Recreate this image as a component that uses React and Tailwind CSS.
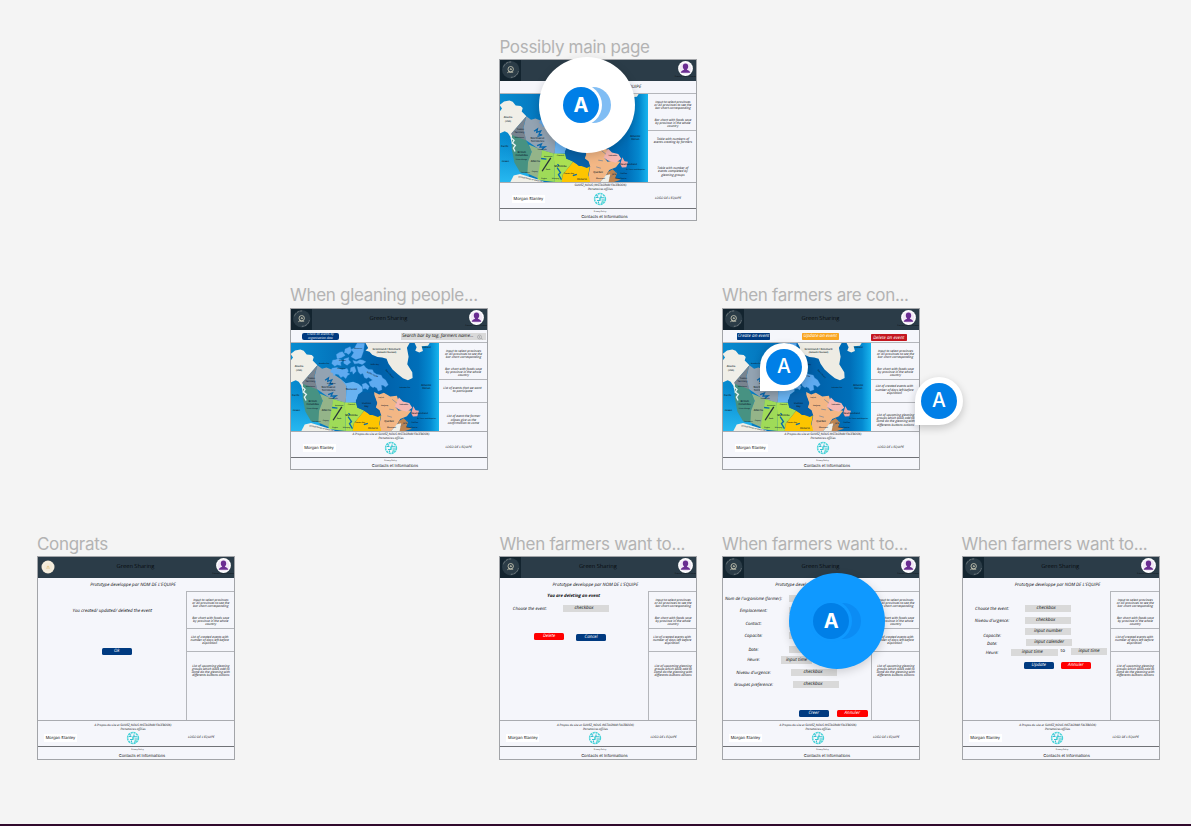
import React from "react";

/* Small block of one or more centred lines. */
function Lines({ text, className = "" }) {
  return (
    <p className={`flex flex-col items-center whitespace-nowrap text-[3.3px] leading-[3.3px] italic ${className}`}>
      {text.map((l) => (
        <span key={l}>{l}</span>
      ))}
    </p>
  );
}

function Field({ className = "w-[46px]", children }) {
  return (
    <span className={`flex h-[7px] shrink-0 items-center justify-center whitespace-nowrap bg-[#d9d9d9] text-[4.7px] leading-none italic ${className}`}>
      {children}
    </span>
  );
}

function Button({ className, children }) {
  return (
    <span className={`flex h-[7px] shrink-0 items-center justify-center whitespace-nowrap leading-none italic text-white ${className}`}>
      {children}
    </span>
  );
}

function FormButton({ className, children }) {
  return <Button className={`w-[30.5px] rounded-[1.5px] text-[4.5px] ${className}`}>{children}</Button>;
}

function Row({ label, className = "h-[12px]", children }) {
  return (
    <div className={`flex shrink-0 items-start ${className}`}>
      <span className="w-[61px] shrink-0 whitespace-nowrap text-center text-[4.4px] leading-[8px] italic">{label}</span>
      {children}
    </div>
  );
}

const MAP_LABELS = [
  [58, 258, "Alaska", 8], [58, 268, "(USA)", 7], [95, 292, "Yukon", 7], [92, 302, "Territory", 7],
  [146, 319, "Northwest", 8], [146, 329, "Territories", 8], [215, 325, "Nunavut", 8],
  [99, 362, "British", 8], [99, 371, "Columbia", 8], [140, 388, "Alberta", 8], [215, 403, "Manitoba", 8],
  [178, 412, "Sask.", 6], [279, 443, "Ontario", 8], [328, 421, "Quebec", 8], [260, 368, "Hudson", 7], [260, 377, "Bay", 7],
  [320, 206, "Greenland / Denmark", 8], [320, 215, "(Kalaallit Nunaat)", 7], [440, 200, "Iceland", 7],
  [439, 314, "Atlantic", 8], [439, 323, "Ocean", 8], [48, 344, "Pacific", 7], [50, 388, "Ocean", 7],
  [375, 321, "Labrador Sea", 5], [285, 251, "Baffin Bay", 5], [419, 398, "Newfoundland", 7],
  [440, 411, "St. Pierre and Miquelon", 5], [133, 250, "Beaufort Sea", 5], [98, 383, "Prince George", 5],
  [110, 421, "Vancouver", 5], [138, 418, "Calgary", 5], [166, 440, "Regina", 5], [200, 440, "Winnipeg", 5],
  [240, 423, "Thunder Bay", 5], [335, 438, "Montreal", 6], [376, 428, "N.B.", 6], [404, 425, "Halifax", 6],
  [372, 372, "Labrador", 6], [92, 316, "Whitehorse", 5], [155, 307, "Great Bear", 5], [160, 354, "Yellowknife", 5],
  [304, 350, "Ivujivik", 5], [314, 373, "Kuujjuaq", 5], [215, 370, "Churchill", 5], [188, 239, "Resolute", 5],
  [185, 262, "Victoria Is.", 5], [235, 205, "Ellesmere", 5], [395, 440, "Nova Scotia", 6], [178, 373, "Athabasca", 5],
];

const ISLANDS = [
  "232,189 254,189 251,212 244,232 228,237 214,229 222,217 214,207 224,203",
  "196,206 205,202 211,199 215,210 211,218 206,222 199,217 194,218",
  "170,222 179,216 188,214 196,225 184,232 172,234",
  "159,239 168,238 176,234 188,241 182,247 184,255 172,253 165,257 156,249",
  "193,236 207,231 206,238 213,245 202,254 192,248",
  "219,240 231,243 240,238 249,239 258,244 247,252 236,248 224,250",
  "157,263 172,261 187,268 202,264 206,272 202,276 210,280 203,285 198,294 190,287 183,291 176,282 168,280 162,286 160,278 152,274",
  "213,262 224,258 229,272 220,281 218,272 211,274",
  "232,258 240,260 252,254 258,262 266,267 278,268 281,275 290,281 304,284 308,292 317,298 325,312 317,319 310,314 304,313 306,327 295,331 291,322 283,318 280,321 272,316 267,304 272,302 278,298 266,290 260,294 254,291 249,278 242,281 236,274",
  "247,311 258,307 268,317 264,327 256,323 250,325",
];

const covered = (x, y) => Math.hypot(x - 293, y - 222) < 165;

function CanadaMap({ id }) {
  const clear = (x, y) => id !== "main" || !covered(x, y);
  return (
    <svg viewBox="31 188 446 262" preserveAspectRatio="none" className="block h-[88px] w-[149px] shrink-0">
      <defs>
        <linearGradient id={`${id}a`} x1="0" x2="1" y1="0" y2="0">
          <stop offset="0" stopColor="#078dd1" />
          <stop offset="0.3" stopColor="#0475bd" />
          <stop offset="0.6" stopColor="#0060a9" />
          <stop offset="0.86" stopColor="#006fb9" />
          <stop offset="0.94" stopColor="#0489d0" />
          <stop offset="1" stopColor="#18b5ee" />
        </linearGradient>
        <linearGradient id={`${id}b`} x1="0" x2="0" y1="0" y2="1">
          <stop offset="0.5" stopColor="#20b4ee" stopOpacity="0" />
          <stop offset="1" stopColor="#27b8f0" />
        </linearGradient>
      </defs>
      <rect x="31" y="188" width="446" height="262" fill={`url(#${id}a)`} />
      <path d="M31 188H120V450H31Z" fill={`url(#${id}b)`} />
      <path d="M31 243 40 231 33 221 46 210 62 207 72 211 81 222 96 224 102 230 99 240 113 254 70 304 78 318 82 334 77 350 80 362 73 356 69 334 65 315 57 303 48 299 31 306Z" fill="#f0efe8" />
      <path d="M113 254 67 306 76 322 113 328 104 288Z" fill="#788490" />
      <path d="M113 254 127 265 140 261 157 268 166 284 184 296 200 314 198 367 150 352 112 326 104 290Z" fill="#93a3b2" />
      <path d="M184 296 198 308 220 303 236 309 248 320 248 332 235 341 228 365 198 367 200 316Z" fill="#69b3f2" />
      {ISLANDS.map((p) => (
        <polygon key={p} points={p} fill="#5eaaf0" stroke="#5eaaf0" strokeWidth="1" />
      ))}
      <path d="M70 310 112 326 129 358 119 390 123 424 94 421 77 392 69 350Z" fill="#479282" />
      <path d="M120 338 160 355 153 441 116 425 118 390 129 360Z" fill="#94b489" />
      <path d="M160 355 195 365 198 450 146 444Z" fill="#9fdb58" />
      <path d="M195 365 229 366 233 381 254 388 221 429 219 450 198 450Z" fill="#aae052" />
      <path d="M254 388 270 402 303 403 298 430 308 450 219 450 221 429Z" fill="#fdc500" />
      <path d="M283 334 298 341 312 336 331 347 351 345 357 365 345 376 356 390 374 386 394 390 381 406 361 414 350 433 334 450 304 450 299 430 304 404 299 388 288 380 292 365 284 354Z" fill="#f3b785" />
      <path d="M357 350 369 362 388 367 397 381 381 393 357 386 344 377Z" fill="#f5b7b3" />
      <path d="M400 376 407 388 417 390 412 406 399 407 394 397Z" fill="#f0a7a6" />
      <path d="M356 421 371 412 384 424 379 437 396 443 375 450 350 450Z" fill="#bd8451" />
      <path d="M257 188H389L381 202 386 229 382 251 397 275 398 292 384 299 369 293 354 281 338 267 326 250 320 235 307 231 293 230 277 223 269 214 257 210 265 203Z" fill="#eeece4" />
      <path d="M404 188H449L444 196 425 198 429 212 418 216 406 211 410 201Z" fill="#eeece4" />
      <path d="M65 450 75 431 94 426 150 443 166 450Z" fill="#f0efe8" />
      <path d="M334 450 351 430 364 427 359 450Z" fill="#f0efe8" />
      <path d="M67 318l9 8-5 8 9 7-6 8 5 10" fill="none" stroke="#e4f2f2" strokeWidth="4" />
      <path d="M136 299l10-7-2 10 12-4-5 10 9 2-14 4M145 342l13-5-4 9 15-1-10 8M157 380l16 2M205 407l10 15-6 6 9 15M206 397l5 5M252 431l12-4" fill="none" stroke="#0868ad" strokeWidth="4" />
      <path d="M228 360 236 344 250 334 280 337 288 354 292 368 284 382 298 392 303 404 294 408 278 402 262 396 250 388 232 380Z" fill="#0862a8" />
      <path d="M186 378 160 418" stroke="#27333b" strokeWidth="4" />
      <path d="M337 356l14 11M362 437l20-17M322 405l14 4M328 385l14 2" stroke="#6c8199" strokeWidth="2" />
      <g fill="#0b1b2b" textAnchor="middle" fontFamily="Open Sans, sans-serif" fontWeight="600">
        {MAP_LABELS.filter(([x, y]) => clear(x, y)).map(([x, y, t, s]) => (
          <text key={`${x}-${y}`} x={x} y={y + 2} fontSize={s}>{t}</text>
        ))}
        {id !== "main" && <text fontSize="6" transform="translate(328 281) rotate(48)">Davis Strait</text>}
        {id !== "main" && <text fontSize="6" transform="translate(277 283) rotate(24)">Baffin Island</text>}
        <text fontSize="6" transform="translate(124 443) rotate(12)">United States of America</text>
      </g>
    </svg>
  );
}

function Logo({ light }) {
  if (light)
    return (
      <svg viewBox="0 0 22 22" className="h-[22px] w-[22px] shrink-0">
        <circle cx="11" cy="11" r="6.500" fill="#f3ead8" />
        <circle cx="11" cy="11" r="5" fill="none" stroke="#f8f3e8" strokeWidth=".7" />
        <path d="M9 12.500h4M9.700 11.300l1.300-1.500 1.300 1.500z" stroke="#e6cf9f" fill="#e3bd70" strokeWidth=".6" />
      </svg>
    );
  return (
    <svg viewBox="0 0 22 22" className="h-[22px] w-[22px] shrink-0 bg-[#13242f]">
      <circle cx="11.700" cy="10.700" r="8.700" fill="#2b3c47" />
      <path d="M4.400 8.200A7.700 7.700 0 0 1 12.200 3" fill="none" stroke="#9da4a3" strokeWidth=".9" strokeDasharray=".8 .7" />
      <path d="M19.300 12.500A7.700 7.700 0 0 1 11.200 18.300" fill="none" stroke="#9da4a3" strokeWidth=".9" strokeDasharray=".8 .7" />
      <circle cx="11.700" cy="10.200" r="2.700" fill="none" stroke="#d4d2bd" strokeWidth=".8" />
      <path d="M8.300 13.800l2-1.500M9.700 13.200h4.500M11 11.200l.8-1.800.9 1.800" fill="none" stroke="#d4d2bd" strokeWidth=".8" />
    </svg>
  );
}

function Avatar() {
  return (
    <svg viewBox="0 0 15 15" className="h-[15px] w-[15px] shrink-0">
      <circle cx="7.500" cy="7.500" r="7.400" fill="#fff" />
      <circle cx="7.500" cy="7.500" r="6" fill="#f1e8f6" />
      <path d="M7.500 2.600c1.800 0 2.700 1.200 2.700 2.800 0 1.300-.6 2.400-1.400 3 .3.8 3.200.9 3.500 3.300H2.700c.3-2.400 3.200-2.500 3.500-3.300-.8-.6-1.400-1.700-1.400-3 0-1.600.9-2.800 2.700-2.800z" fill="#6a2c91" />
    </svg>
  );
}

function PartnerLogo() {
  return (
    <svg viewBox="0 0 14 14" className="h-[14px] w-[14px] shrink-0">
      <circle cx="7" cy="7" r="5.400" fill="none" stroke="#46d3d8" strokeWidth="1.500" strokeDasharray="2.200 .6" />
      <path d="M3 5.500h2.500M4 8.500h3V5.200M8 3.500v2.300h3M8.500 8h3M5.500 11v-1.600M9 11.500V9.600" stroke="#35bfd0" strokeWidth="1.100" fill="none" />
      <circle cx="7" cy="7" r="1" fill="#5ae0d4" />
      <circle cx="9.800" cy="9.600" r=".9" fill="#66e5cf" />
      <circle cx="4.500" cy="4" r=".8" fill="#3cb6d6" />
    </svg>
  );
}

const PROVINCES = ["Input to select provinces", "or All provinces to see the", "bar chart corresponding"];
const CHART = ["Bar chart with foods save", "by province in the whole", "country"];
const CREATED = ["List of created events with", "number of days left before", "expiration"];
const UPCOMING = ["List of upcoming gleaning", "groups which back add to", "come do the gleaning with", "differents buttons actions"];

function SideColumn({ tall, merged, third, fourth }) {
  return (
    <aside className={`flex flex-1 flex-col border-[#b4b6bb] ${tall ? "border-t border-l" : ""}`}>
      <div className="flex h-[37px] shrink-0 flex-col items-center gap-[8.500px] border-b border-[#b4b6bb] pt-[5.500px]">
        <Lines text={PROVINCES} />
        <Lines text={CHART} />
      </div>
      {merged ? (
        <div className="flex flex-1 flex-col items-center justify-between pt-[6px] pb-[6px]">
          <Lines text={third} />
          <Lines text={fourth} />
        </div>
      ) : (
        <>
          <div className={`flex h-[22.500px] shrink-0 items-center justify-center border-b border-[#b4b6bb] pr-[2px] ${tall ? "" : "pb-[3px]"}`}>
            <Lines text={third} />
          </div>
          <div className={`flex flex-1 justify-center ${tall ? "items-start pt-[12px]" : "items-center pt-[5px]"}`}>
            <Lines text={fourth} />
          </div>
        </>
      )}
    </aside>
  );
}

/* One artboard: header, toolbar, body with side column, partner strip, contact bar. */
function Artboard({
  place, title, titleHeight = "h-[22px]", map, lightLogo, hideTitle, bar, children,
  propos = "A Propos du site et SUIVEZ_NOUS INSTAGRAM FACEBOOK)", third = CREATED, fourth = UPCOMING,
}) {
  const tall = !map;
  return (
    <section className={`absolute w-[198px] ${place}`}>
      <h2 className={`whitespace-nowrap font-[Inter] text-[17px] leading-[20px] font-normal tracking-[-0.018em] text-[#b3b3b3] ${titleHeight}`}>{title}</h2>
      <div
        className={`flex flex-col overflow-hidden bg-[#f5f6fb] text-[#08090c] outline outline-1 -outline-offset-1 outline-[#a2a4a8] [font-family:'Open_Sans',sans-serif] [text-rendering:geometricPrecision] ${tall ? "h-[204px]" : "h-[162px]"}`}
      >
        <header className="flex h-[22px] shrink-0 bg-[#2b3c48] text-[#060a0d]">
          <Logo light={lightLogo} />
          <span className="flex-1 pt-[5px] text-center text-[5.700px] leading-[11px]">{!hideTitle && "Green Sharing"}</span>
          <div className="flex w-[23px] shrink-0 flex-col items-center pt-[2.300px]">
            <Avatar />
            <span className="whitespace-nowrap text-[2px] leading-[2.500px]">Prénom Nom utilisateur</span>
          </div>
        </header>
        <div className={`flex shrink-0 ${tall ? "h-[13px] items-center justify-center pt-[2px] pr-[6px]" : "h-[13px] border-b border-[#b4b6bb]"}`}>
          {tall ? <span className="text-[4.500px] leading-none italic">Prototype developpe par NOM DE L'EQUIPE</span> : bar}
        </div>
        <div className={`flex shrink-0 ${tall ? "h-[128.500px]" : "h-[88px]"}`}>
          {map ? <CanadaMap id={map} /> : <div className="flex w-[148.500px] shrink-0 flex-col">{children}</div>}
          <SideColumn tall={tall} merged={map === "main"} third={third} fourth={fourth} />
        </div>
        <div className={`flex shrink-0 flex-col border-t border-[#a9abb0] ${tall ? "h-[26.500px] pt-[2px]" : "h-[25.500px]"}`}>
          <div className={`flex flex-col items-center text-[3.050px] leading-[4.300px] whitespace-nowrap italic ${tall ? "pr-[6px]" : "pl-[4px]"}`}>
            <span>{propos}</span>
            <span>Partenaires affilies</span>
          </div>
          <div className={`flex shrink-0 items-center ${tall ? "gap-[48.500px] pl-[7px]" : "gap-[48px] pl-[12.500px]"}`}>
            <span className="flex h-[8px] w-[33px] shrink-0 items-center justify-center whitespace-nowrap bg-white font-[Inter] text-[4px] leading-none">Morgan Stanley</span>
            <PartnerLogo />
            <span className="whitespace-nowrap text-[3.200px] leading-none italic">LOGO DE L'EQUIPE</span>
          </div>
        </div>
        <footer className="flex flex-1 flex-col items-center border border-[#707277] pt-px pl-[12px]">
          <span className="pr-[9px] text-[2px] leading-[4px]">Privacy Policy</span>
          <span className={`font-[Inter] text-[4px] ${tall ? "leading-[8px]" : "leading-[6.500px]"}`}>Contacts et Informations</span>
        </footer>
      </div>
    </section>
  );
}

function ClusterBubble({ place, blue }) {
  return (
    <div className={`absolute flex h-24 w-24 items-center rounded-full pl-6 shadow-[0_3px_10px_rgba(0,0,0,0.16)] ${place} ${blue ? "bg-[#0f99ff]" : "bg-white"}`}>
      <div className={`z-10 flex h-9 w-9 items-center justify-center rounded-full bg-[#007fe7] ring-[3px] ${blue ? "ring-[#0f99ff]" : "ring-white"}`}>
        <span className="font-[Inter] text-[20px] leading-none font-bold text-white">A</span>
      </div>
      <div className={`-ml-6 h-9 w-9 rounded-full ${blue ? "bg-[#0b8cf4]" : "bg-[#80bdf4]"}`} />
    </div>
  );
}

function CommentPin({ place }) {
  return (
    <div className={`absolute flex h-12 w-12 items-center justify-center rounded-full rounded-bl-[2px] bg-white shadow-[0_3px_9px_rgba(0,0,0,0.2)] ${place}`}>
      <div className="flex h-9 w-9 items-center justify-center rounded-full bg-[#007fe7]">
        <span className="font-[Inter] text-[19.500px] leading-none font-medium text-white">A</span>
      </div>
    </div>
  );
}

export default function App() {
  return (
    <main className="relative h-[826px] w-[1191px] overflow-hidden border-b-2 border-[#300a2c] bg-[#f4f4f4]">
      <Artboard
        place="left-[499.400px] top-[37px]"
        title="Possibly main page"
        map="main"
        hideTitle
        propos="SUIVEZ_NOUS (INSTAGRAM FACEBOOK)"
        third={["Table with numbers of", "events creating by farmers"]}
        fourth={["Table with number of", "events completed by", "gleaning groups"]}
        bar={<span className="flex-1 pt-[2px] text-center text-[4.500px] leading-[8px] italic">Prototype developpe par NOM DE L'EQUIPE</span>}
      />

      <Artboard
        place="left-[290px] top-[285px]"
        titleHeight="h-[23px]"
        title="When gleaning people..."
        map="glean"
        third={["List of events that we want", "to participate"]}
        fourth={["List of event the farmer", "allows give us the", "confirmation to come"]}
        bar={
          <div className="flex flex-1 items-center justify-between pt-px pr-[2.500px] pl-[12px]">
            <Button className="h-[7.500px] w-[37px] rounded-[2px] bg-[#003a80] text-center text-[3.200px]">Check all events by<br />organisation date</Button>
            <div className="flex h-[6.500px] w-[85px] items-center justify-between bg-[#d9d9d9] px-[1.500px] text-[4.700px] leading-none italic">
              <span className="whitespace-nowrap">Search bar by tag, farmers name...</span>
              <svg viewBox="0 0 8 6" className="h-[6px] w-[8px] shrink-0">
                <circle cx="3.500" cy="3" r="2" fill="none" stroke="#8b8d90" strokeWidth=".5" />
                <path d="M5 4.400l1.800 1M3.500 2v2" stroke="#8b8d90" strokeWidth=".5" />
              </svg>
            </div>
          </div>
        }
      />

      <Artboard
        place="left-[722px] top-[285px]"
        titleHeight="h-[23px]"
        title="When farmers are con..."
        map="farm"
        bar={
          <div className="flex flex-1 items-start justify-between pt-[3px] pr-[13px] pl-[15px]">
            <Button className="w-[33px] rounded-[0.800px] bg-[#003a80] text-[4.600px]">Create an event</Button>
            <Button className="w-[36.500px] rounded-[0.800px] bg-[#f9a51f] text-[4.600px]">Update an event</Button>
            <Button className="mt-[1.300px] w-[36.500px] rounded-[0.800px] bg-[#c4161f] text-[4.600px]">Delete an event</Button>
          </div>
        }
      />

      <Artboard place="left-[37px] top-[534px]" title="Congrats" lightLogo>
        <div className="flex flex-col items-center gap-[33px] pt-[17px]">
          <span className="pl-[2px] text-[4.500px] leading-[7px] italic">You created/ updated/ deleted the event</span>
          <FormButton className="mr-[-11px] bg-[#003a80]">Ok</FormButton>
        </div>
      </Artboard>

      <Artboard place="left-[499.400px] top-[534px]" title="When farmers want to...">
        <span className="pt-px text-center text-[4.400px] leading-[8px] font-bold italic">You are deleting an event</span>
        <div className="flex flex-col gap-[21px] pt-[5px]">
          <Row label="Choose the event:" className="h-[7px]">
            <Field className="ml-[2.600px] w-[46px] pr-[4px]">checkbox</Field>
          </Row>
          <div className="flex gap-[11.500px] pl-[34.500px]">
            <FormButton className="bg-[#ff0000]">Delete</FormButton>
            <FormButton className="mt-[0.600px] bg-[#003a80]">Cancel</FormButton>
          </div>
        </div>
      </Artboard>

      <Artboard place="left-[722px] top-[534px]" title="When farmers want to...">
        <div className="flex flex-col pt-[4px] pl-[1px]">
          <Row label="Nom de l'organisme (farmer):"><Field className="ml-[5px] w-[46px]" /></Row>
          <Row label="Emplacement:" className="h-[13px]"><Field className="ml-[5px] w-[46px]" /></Row>
          <Row label="Contact:"><Field className="ml-[5px] w-[46px]" /></Row>
          <Row label="Capacite:" className="h-[14px]"><Field className="ml-[5px] w-[46px]" /></Row>
          <Row label="Date:" className="h-[10px]"><Field className="ml-[5px] w-[46px]" /></Row>
          <Row label="Heure:" className="h-[12.500px]"><Field className="-ml-[3px] h-[8px] w-[31px]">input time</Field></Row>
          <Row label="Niveau d'urgence:" className="h-[12px]"><Field className="ml-[7px] w-[46px] pr-[2px]">checkbox</Field></Row>
          <Row label="Groupes preference:" className="h-[12px]"><Field className="ml-[9px] w-[46px] pr-[6px]">checkbox</Field></Row>
        </div>
        <div className="flex flex-1 items-end justify-end gap-[8px] pr-[3px] pb-[2.500px]">
          <FormButton className="bg-[#003a80]">Creer</FormButton>
          <FormButton className="bg-[#ff0000]">Annuler</FormButton>
        </div>
      </Artboard>

      <Artboard place="left-[961.600px] top-[534px]" title="When farmers want to...">
        <div className="flex flex-col pt-[14px]">
          <Row label="Choose the event:" className="h-[12px]"><Field className="ml-[2.600px] w-[46px] pr-[4px]">checkbox</Field></Row>
          <Row label="Niveau d'urgence:" className="h-[11px]"><Field className="ml-[2.600px] w-[46px] pr-[5px]">checkbox</Field></Row>
          <Row label={<span className="inline-block pt-[4px]">Capacite:</span>} className="h-[11px]"><Field className="ml-[2.600px] w-[46px]">input number</Field></Row>
          <Row label={<span className="inline-block pt-px">Date:</span>} className="h-[10px]"><Field className="ml-[3.600px] w-[46px]">input calender</Field></Row>
          <Row label="Heure:" className="h-[12.500px]">
            <Field className="-ml-[11.500px] w-[46.500px] pr-[4px]">input time</Field>
            <span className="w-[13.500px] pl-[3px] text-[4.700px] leading-[5px]">to</span>
            <Field className="-mt-px w-[36px]">input time</Field>
          </Row>
          <div className="flex gap-[6.500px] pl-[62px]">
            <FormButton className="bg-[#003a80]">Update</FormButton>
            <FormButton className="mt-[0.600px] bg-[#ff0000]">Annuler</FormButton>
          </div>
        </div>
      </Artboard>

      <ClusterBubble place="left-[539px] top-[57px]" />
      <CommentPin place="left-[760px] top-[343px]" />
      <CommentPin place="left-[915px] top-[377px]" />
      <ClusterBubble place="left-[789.300px] top-[573px]" blue />
    </main>
  );
}
